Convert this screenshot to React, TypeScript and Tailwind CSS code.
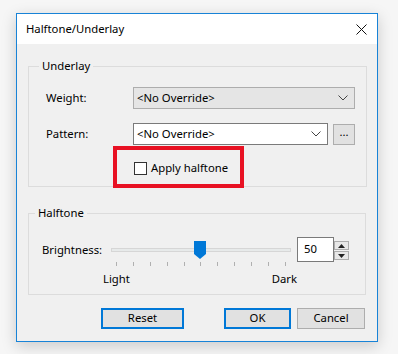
import React from 'react';

const font = { fontFamily: '"Noto Sans", "Open Sans", sans-serif' };

function Chevron() {
  return (
    <svg width="10" height="6" viewBox="0 0 10 6" className="shrink-0">
      <path d="M0.5 0.5 L5 5 L9.5 0.5" fill="none" stroke="#444" strokeWidth="1" />
    </svg>
  );
}

function Combo({ width, gray }: { width: string; gray?: boolean }) {
  return (
    <div
      className={`${width} h-[22px] flex items-center justify-between pl-[3px] pr-[6px] border ${
        gray ? 'bg-[#e5e5e5] border-[#adadad]' : 'bg-white border-[#7a7a7a]'
      }`}
    >
      <span>&lt;No Override&gt;</span>
      <Chevron />
    </div>
  );
}

export default function App() {
  const ticks = Array.from({ length: 11 }, (_, i) => i);
  return (
    <div className="w-[398px] h-[354px] bg-[#f6f6f6] pl-[16px] pt-[13px] text-[11.3px] text-black" style={font}>
      <div className="relative w-[362px] h-[329px] border border-[#1883d7] bg-[#f0f0f0] shadow-[0_4px_14px_rgba(0,0,0,0.18)] flex flex-col">
        {/* title bar */}
        <div className="h-[30px] bg-white flex items-center justify-between pl-[9px] pr-[10px]">
          <span>Halftone/Underlay</span>
          <svg width="11" height="11" viewBox="0 0 11 11">
            <path d="M0.5 0.5 L10.5 10.5 M10.5 0.5 L0.5 10.5" stroke="#111" strokeWidth="1" />
          </svg>
        </div>

        <div className="flex-1 pl-[11px] pt-[22px]">
          {/* Underlay group */}
          <div className="relative w-[339px] h-[121px] border border-[#dcdcdc]">
            <span className="absolute -top-[9px] left-[10px] px-[3px] bg-[#f0f0f0] leading-[16px]">Underlay</span>
            <div className="mt-[20px] flex items-center h-[22px]">
              <span className="w-[104px] pl-[17px]">Weight:</span>
              <Combo width="w-[222px]" gray />
            </div>
            <div className="mt-[14px] flex items-center h-[22px]">
              <span className="w-[104px] pl-[17px]">Pattern:</span>
              <Combo width="w-[195px]" />
              <div className="ml-[5px] w-[22px] h-[21px] bg-[#e1e1e1] border border-[#adadad] flex items-center justify-center leading-none pb-[4px]">
                ...
              </div>
            </div>
            <div className="mt-[17px] ml-[105px] flex items-center gap-[4px] h-[13px]">
              <div className="w-[13px] h-[13px] bg-white border border-[#333]" />
              <span>Apply halftone</span>
            </div>
          </div>

          {/* Halftone group */}
          <div className="relative mt-[26px] w-[338px] h-[82px] border border-[#dcdcdc]">
            <span className="absolute -top-[9px] left-[6px] px-[3px] bg-[#f0f0f0] leading-[16px]">Halftone</span>
            <div className="mt-[27px] flex items-start">
              <span className="w-[82px] pl-[13px] mt-[1px]">Brightness:</span>
              <div className="w-[180px] flex flex-col">
                <div className="relative h-[18px] flex items-center">
                  <div className="w-full h-[4px] bg-[#e7eaea] border border-[#d6d6d6]" />
                  <svg className="absolute left-[83px] top-[0px]" width="12" height="18" viewBox="0 0 12 18">
                    <path d="M0 0 H12 V13 L6 18 L0 13 Z" fill="#0078d7" />
                  </svg>
                </div>
                <div className="mt-[3px] flex justify-between px-[5px]">
                  {ticks.map((t) => (
                    <div key={t} className="w-px h-[4px] bg-[#b0b0b0]" />
                  ))}
                </div>
                <div className="-ml-[8px] -mr-[6px] mt-[5px] flex justify-between leading-[16px]">
                  <span>Light</span>
                  <span>Dark</span>
                </div>
              </div>
              <div className="ml-[6px] -mt-[4px] flex items-start">
                <div className="w-[37px] h-[25px] bg-white border border-[#7a7a7a] flex items-center pl-[6px]">50</div>
                <div className="mt-[4px] flex flex-col gap-[1px]">
                  <div className="w-[15px] h-[9px] bg-[#e8e8e8] border border-[#adadad] flex items-center justify-center">
                    <svg width="7" height="4" viewBox="0 0 7 4"><path d="M0 4 L3.5 0 L7 4 Z" fill="#222" /></svg>
                  </div>
                  <div className="w-[15px] h-[9px] bg-[#e8e8e8] border border-[#adadad] flex items-center justify-center">
                    <svg width="7" height="4" viewBox="0 0 7 4"><path d="M0 0 L3.5 4 L7 0 Z" fill="#222" /></svg>
                  </div>
                </div>
              </div>
            </div>
          </div>

          {/* buttons */}
          <div className="mt-[13px] flex">
            <button className="ml-[73px] w-[83px] h-[21px] bg-[#e1e1e1] border-2 border-[#0078d7]">Reset</button>
            <button className="ml-[40px] w-[67px] h-[21px] bg-[#e1e1e1] border-2 border-[#0078d7]">OK</button>
            <button className="ml-[6px] w-[68px] h-[21px] bg-[#e1e1e1] border border-[#adadad]">Cancel</button>
          </div>
        </div>

        {/* red annotation box */}
        <div className="absolute left-[96px] top-[132px] w-[131px] h-[42px] border-[4px] border-[#e81123]" />
      </div>
    </div>
  );
}
